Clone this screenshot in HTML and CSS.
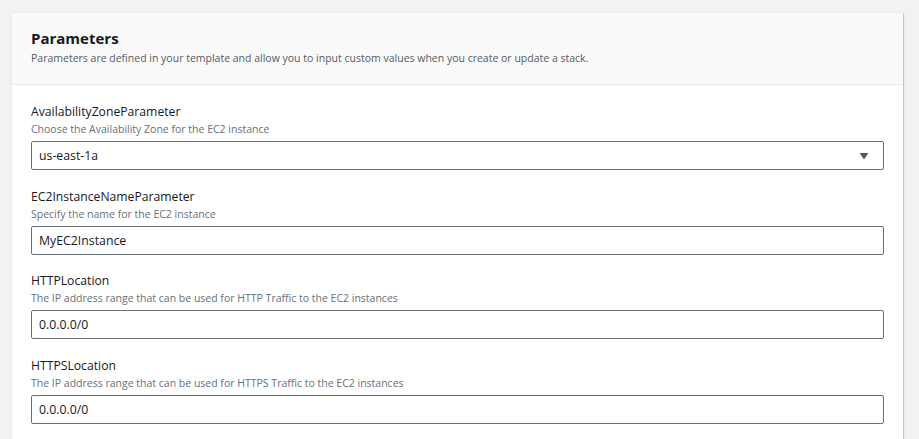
FILE: index.html
```html
<!DOCTYPE html>
<html>
<head>
<meta charset="utf-8">
<link rel="stylesheet" href="styles.css">
</head>
<body>
<div class="page">
  <section class="panel">
    <header class="panel-header">
      <h2 class="title">Parameters</h2>
      <p class="subtitle">Parameters are defined in your template and allow you to input custom values when you create or update a stack.</p>
    </header>
    <div class="panel-body">
      <div class="field">
        <div class="label">AvailabilityZoneParameter</div>
        <div class="desc">Choose the Availability Zone for the EC2 instance</div>
        <div class="input select">
          <span>us-east-1a</span>
          <svg class="caret" width="10" height="8" viewBox="0 0 10 8"><path d="M0.5 1 L9.5 1 L5 7.5 Z" fill="#545b64"/></svg>
        </div>
      </div>
      <div class="field">
        <div class="label">EC2InstanceNameParameter</div>
        <div class="desc">Specify the name for the EC2 instance</div>
        <div class="input"><span>MyEC2Instance</span></div>
      </div>
      <div class="field">
        <div class="label">HTTPLocation</div>
        <div class="desc">The IP address range that can be used for HTTP Traffic to the EC2 instances</div>
        <div class="input"><span>0.0.0.0/0</span></div>
      </div>
      <div class="field">
        <div class="label">HTTPSLocation</div>
        <div class="desc">The IP address range that can be used for HTTPS Traffic to the EC2 instances</div>
        <div class="input"><span>0.0.0.0/0</span></div>
      </div>
    </div>
  </section>
</div>
</body>
</html>
```
FILE: styles.css
```css
html, body {
  margin: 0;
  padding: 0;
  background: #f2f2f2;
  font-family: "Open Sans", "Noto Sans", sans-serif;
  color: #16191f;
}
.page {
  padding: 12px 15px 0 12px;
  height: 439px;
  box-sizing: border-box;
  overflow: hidden;
}
.panel {
  background: #ffffff;
  border-top: 1px solid #eaeded;
  box-shadow: 1px 1px 1px 0 rgba(0,0,0,0.18), -1px 0 0 0 rgba(0,0,0,0.03);
  width: 891px;
  min-height: 480px;
}
.panel-header {
  background: #fafafa;
  border-bottom: 1px solid #eaeded;
  padding: 15px 19px 18px 19px;
}
.title {
  margin: 0 0 2px 0;
  font-size: 15px;
  font-weight: 700;
  line-height: 20px;
  color: #16191f;
}
.subtitle {
  margin: 0;
  font-size: 10.5px;
  line-height: 16px;
  color: #545b64;
}
.panel-body {
  padding: 18px 19px 0 19px;
  display: flex;
  flex-direction: column;
  gap: 17.7px;
}
.field {
  display: flex;
  flex-direction: column;
}
.label {
  font-size: 12.2px;
  line-height: 18px;
  color: #16191f;
}
.desc {
  font-size: 10.5px;
  line-height: 16px;
  color: #687078;
  margin-bottom: 4px;
}
.input {
  height: 29px;
  box-sizing: border-box;
  border: 1px solid #687078;
  border-radius: 2px;
  display: flex;
  align-items: center;
  justify-content: space-between;
  padding: 0 14px 0 7px;
  font-size: 12.3px;
  color: #16191f;
  width: 853px;
}
.caret {
  display: block;
}
```
